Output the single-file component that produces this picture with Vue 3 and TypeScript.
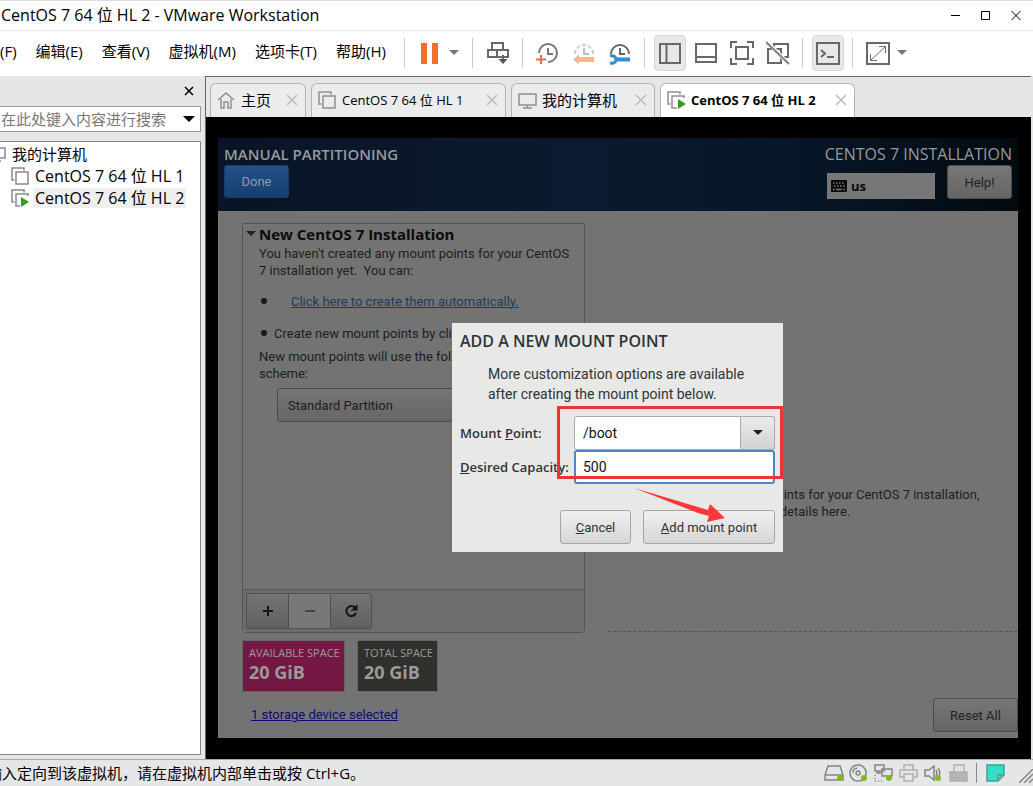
<script setup lang="ts">
import { ref } from 'vue'

interface VmTab {
  label: string
  icon: 'home' | 'vm' | 'computer' | 'running'
  size: 'short' | 'medium' | 'long'
  cjk: boolean
}

const menus: string[] = ['(F)', '编辑(E)', '查看(V)', '虚拟机(M)', '选项卡(T)', '帮助(H)']

const tabs: VmTab[] = [
  { label: '主页', icon: 'home', size: 'short', cjk: true },
  { label: 'CentOS 7 64 位 HL 1', icon: 'vm', size: 'long', cjk: false },
  { label: '我的计算机', icon: 'computer', size: 'medium', cjk: true },
  { label: 'CentOS 7 64 位 HL 2', icon: 'running', size: 'long', cjk: false },
]
const activeTab = ref(3)

const machines = [
  { name: 'CentOS 7 64 位 HL 1', running: false },
  { name: 'CentOS 7 64 位 HL 2', running: true },
]

const search = ref('')
const keyboard = ref('us')
const scheme = ref('Standard Partition')
const mountPoint = ref('/boot')
const capacity = ref('500')
</script>

<template>
  <div class="window">
    <header class="titlebar">
      <h1>CentOS 7 64 位 HL 2 - VMware Workstation</h1>
      <div class="window-buttons">
        <button type="button" aria-label="Minimize">
          <svg width="12" height="12" viewBox="0 0 12 12"><path d="M1 6.500h9" /></svg>
        </button>
        <button type="button" aria-label="Maximize">
          <svg width="12" height="12" viewBox="0 0 12 12"><path d="M1.500 2.500h8v8h-8z" /></svg>
        </button>
        <button type="button" aria-label="Close">
          <svg width="12" height="12" viewBox="0 0 12 12"><path d="M1.500 2l9 9M10.500 2l-9 9" /></svg>
        </button>
      </div>
    </header>

    <div class="toolbar">
      <nav class="menu">
        <button v-for="m in menus" :key="m" type="button">{{ m }}</button>
      </nav>
      <span class="sep"></span>
      <button class="tool" type="button" aria-label="Suspend">
        <svg width="24" height="24" viewBox="0 0 24 24"><path d="M3 2h6v21H3zM14 2h6v21h-6z" fill="#f26f2b" /></svg>
      </button>
      <button class="caret first-caret" type="button" aria-label="Power options">
        <svg width="10" height="6" viewBox="0 0 10 6"><path d="M0 0h10L5 5z" fill="#777" /></svg>
      </button>
      <span class="sep"></span>
      <button class="tool" type="button" aria-label="Send keys">
        <svg class="line" width="24" height="24" viewBox="0 0 24 24">
          <path d="M6 2h11v7H6zM2 9h9v7H2zM11 9h11v7H11zM17 14v7" /><path d="M12.500 18h9L17 23z" fill="#555" stroke="none" />
        </svg>
      </button>
      <span class="sep"></span>
      <button class="tool" type="button" aria-label="Take snapshot">
        <svg class="line" width="24" height="24" viewBox="0 0 24 24">
          <path d="M3 12A9 9 0 1 1 12 21M12 7v6h5" stroke="#777" /><path d="M5 14v9M0 18.500h10" stroke="#e8743a" />
        </svg>
      </button>
      <button class="tool" type="button" aria-label="Revert snapshot">
        <svg class="line" width="24" height="24" viewBox="0 0 24 24">
          <path d="M3 13a9 9 0 0 1 18 0" stroke="#ccc" stroke-dasharray="4 2" /><path d="M12 7v6h5" stroke="#bbb" />
          <path d="M1 18.500l6-5V16h15v5H7v2.500z" fill="#f8b692" stroke="none" />
        </svg>
      </button>
      <button class="tool" type="button" aria-label="Manage snapshots">
        <svg class="line" width="24" height="24" viewBox="0 0 24 24">
          <path d="M3 13a9 9 0 1 1 18 0M12 7v6h5" stroke="#666" />
          <path d="M2 15c4-1 6 1 6 3.500S6 23 2 22" stroke="#2f8fd0" stroke-width="3" /><path d="M8 18.500h14" stroke="#2f8fd0" stroke-width="4" />
        </svg>
      </button>
      <span class="sep"></span>
      <button class="tool pressed" type="button" aria-label="Show library">
        <svg class="line" width="24" height="24" viewBox="0 0 24 24"><path d="M2 3h20v19H2zM8.500 3v19" /></svg>
      </button>
      <button class="tool" type="button" aria-label="Show thumbnails">
        <svg class="line" width="24" height="24" viewBox="0 0 24 24"><path d="M2 3h20v18H2zM2 16h20" /></svg>
      </button>
      <button class="tool" type="button" aria-label="Full screen">
        <svg class="line" width="24" height="24" viewBox="0 0 24 24">
          <path d="M1 7V1h6M17 1h6v6M23 17v6h-6M7 23H1v-6M6 6h12v12H6z" />
        </svg>
      </button>
      <button class="tool" type="button" aria-label="Unity">
        <svg class="line" width="24" height="24" viewBox="0 0 24 24">
          <path d="M8 8V3h14v13h-5M2 8h13v14H2z" /><path d="M1 1l22 22" stroke="#fff" stroke-width="4" /><path d="M0 1l23 22" stroke="#7d8389" />
        </svg>
      </button>
      <span class="sep"></span>
      <button class="tool pressed" type="button" aria-label="Console view">
        <svg class="line" width="24" height="24" viewBox="0 0 24 24"><path d="M1 2h22v21H1zM5 9l4 3.500L5 16M11 16h7" /></svg>
      </button>
      <span class="sep"></span>
      <button class="tool" type="button" aria-label="Stretch guest">
        <svg class="line thin" width="24" height="24" viewBox="0 0 24 24">
          <path d="M1 2h22v21H1z" stroke-width="2" /><path d="M5 19L19 6M13 5.500h6.500V12M4.500 13v6.500H11" />
        </svg>
      </button>
      <button class="caret" type="button" aria-label="Stretch options">
        <svg width="10" height="6" viewBox="0 0 10 6"><path d="M0 0h10L5 5z" fill="#777" /></svg>
      </button>
    </div>

    <div class="body">
      <aside class="sidebar">
        <div class="side-head">
          <button type="button" aria-label="Close library">
            <svg width="10" height="10" viewBox="0 0 10 10"><path d="M1 1l8 8M9 1L1 9" stroke="#000" stroke-width="1.500" /></svg>
          </button>
        </div>
        <div class="search">
          <input v-model="search" type="text" aria-label="Search" placeholder="在此处键入内容进行搜索" />
          <button type="button" aria-label="Search options">
            <svg width="12" height="6" viewBox="0 0 12 6"><path d="M0 0h12L6 6z" /></svg>
          </button>
        </div>
        <div class="tree">
          <div class="tree-root">
            <svg width="18" height="16" viewBox="0 0 18 16"><path d="M1 2h16v10H1zM6 15h7" fill="none" stroke="#888" stroke-width="1.500" /></svg>
            <span>我的计算机</span>
          </div>
          <ul>
            <li v-for="m in machines" :key="m.name">
              <svg width="18" height="18" viewBox="0 0 18 18">
                <path d="M3.500 13H1V1h12v2.500M5 5h12v12H5z" fill="none" stroke="#888" stroke-width="1.500" />
                <path v-if="m.running" d="M9 7h9v11H9z" fill="#fff" /><path v-if="m.running" d="M10 8l8 5-8 5z" fill="#3c9b1c" />
              </svg>
              <span :class="{ selected: m.running }">{{ m.name }}</span>
            </li>
          </ul>
        </div>
      </aside>

      <main class="workspace">
        <div class="tabs">
          <div v-for="(t, i) in tabs" :key="t.label" class="tab" :class="[t.size, { active: i === activeTab }]">
            <button class="tab-main" :class="{ cjk: t.cjk }" type="button" @click="activeTab = i">
              <svg width="20" height="20" viewBox="0 0 20 20" fill="none" stroke="#909090" stroke-width="1.500">
                <path v-if="t.icon === 'home'" d="M1 10l8-7 8 7M4 9v9h3v-6h4v6h3V9" />
                <path v-else-if="t.icon === 'computer'" d="M1 4h17v11H1zM5 18h9M9.500 15v3" />
                <template v-else>
                  <path d="M3.500 14H1V2h12v2.500M5 6h12v12H5z" />
                  <path v-if="t.icon === 'running'" d="M10 8h10v12H10z" fill="#fff" stroke="none" />
                  <path v-if="t.icon === 'running'" d="M11 9l8 5-8 5z" fill="#3c9b1c" stroke="none" />
                </template>
              </svg>
              <span>{{ t.label }}</span>
            </button>
            <button class="tab-close" type="button" aria-label="Close tab">
              <svg width="12" height="12" viewBox="0 0 12 12"><path d="M1 1l10 10M11 1L1 11" stroke="#bbb" stroke-width="1.500" /></svg>
            </button>
          </div>
        </div>

        <div class="screen">
          <div class="guest">
            <header class="guest-head">
              <div class="head-left">
                <h2>MANUAL PARTITIONING</h2>
                <button class="done" type="button">Done</button>
              </div>
              <div class="head-right">
                <p>CENTOS 7 INSTALLATION</p>
                <div class="head-controls">
                  <label class="keyboard">
                    <svg width="16" height="12" viewBox="0 0 16 12">
                      <rect width="16" height="12" rx="1" fill="#0a0a0a" />
                      <path d="M2 3h12M3 6h11" stroke="#777" stroke-width="1.500" stroke-dasharray="1.500 1.500" /><path d="M2 9.500h1.500M5 9.500h6M12.500 9.500H14" stroke="#777" stroke-width="1.500" />
                    </svg>
                    <input v-model="keyboard" type="text" aria-label="Keyboard layout" readonly />
                  </label>
                  <button class="gray-btn help" type="button">Help!</button>
                </div>
              </div>
            </header>

            <div class="guest-body">
              <section class="left">
                <div class="panel">
                  <div class="panel-main">
                    <h3>
                      <svg width="10" height="6" viewBox="0 0 10 6"><path d="M0 0h10L5 5z" fill="#222" /></svg>
                      New CentOS 7 Installation
                    </h3>
                    <p>You haven't created any mount points for your CentOS<br />7 installation yet.&nbsp; You can:</p>
                    <ul>
                      <li class="auto"><a href="#auto">Click here to create them automatically.</a></li>
                      <li>Create new mount points by clicking the '+' button.</li>
                    </ul>
                    <p>New mount points will use the following partitioning<br />scheme:</p>
                    <select v-model="scheme" class="scheme" aria-label="Partitioning scheme">
                      <option>Standard Partition</option>
                      <option>LVM</option>
                    </select>
                  </div>
                  <div class="panel-tools">
                    <button type="button" aria-label="Add"><svg width="12" height="12" viewBox="0 0 12 12"><path d="M6 1v10M1 6h10" /></svg></button>
                    <button type="button" class="off" aria-label="Remove"><svg width="12" height="12" viewBox="0 0 12 12"><path d="M1 6h10" /></svg></button>
                    <button type="button" aria-label="Reload">
                      <svg width="14" height="14" viewBox="0 0 14 14"><path d="M11 3.500A5 5 0 1 0 12 9" /><path d="M13.500 0v6.500H7z" class="solid" /></svg>
                    </button>
                  </div>
                </div>
                <div class="spaces">
                  <div class="space available"><span>AVAILABLE SPACE</span><strong>20 GiB</strong></div>
                  <div class="space total"><span>TOTAL SPACE</span><strong>20 GiB</strong></div>
                </div>
                <a class="storage" href="#storage">1 storage device selected</a>
              </section>

              <section class="right">
                <div class="details">
                  <p>When you create mount points for your CentOS 7 installation,<br />you'll be able to view their details here.</p>
                </div>
                <button class="gray-btn reset" type="button">Reset All</button>
              </section>
            </div>

            <div class="overlay">
              <form class="dialog" @submit.prevent>
                <h2>ADD A NEW MOUNT POINT</h2>
                <p>More customization options are available<br />after creating the mount point below.</p>
                <div class="field">
                  <label for="mount-point">Mount <u>P</u>oint:</label>
                  <div class="combo">
                    <input id="mount-point" v-model="mountPoint" type="text" />
                    <button type="button" aria-label="Choose mount point">
                      <svg width="10" height="6" viewBox="0 0 10 6"><path d="M0 0h10L5 5z" fill="#222" /></svg>
                    </button>
                  </div>
                </div>
                <div class="field">
                  <label for="capacity"><u>D</u>esired Capacity:</label>
                  <input id="capacity" v-model="capacity" class="focused" type="text" />
                </div>
                <div class="actions">
                  <button type="button"><u>C</u>ancel</button>
                  <button type="submit" class="add"><u>A</u>dd mount point</button>
                </div>
                <span class="highlight"></span>
                <svg class="arrow" width="94" height="38" viewBox="0 0 94 38"><path d="M0 0L74 22l2-6 15 14-18 4 2-6-11-3z" fill="#fb3838" /></svg>
              </form>
            </div>
          </div>
        </div>
      </main>
    </div>

    <footer class="status">
      <p>输入定向到该虚拟机，请在虚拟机内部单击或按 Ctrl+G。</p>
      <div class="devices">
        <svg width="20" height="18" viewBox="0 0 20 18"><path d="M4 2h12l3 9v5H1v-5zM1 11h18" /><circle cx="16" cy="14" r="3" /></svg>
        <svg width="20" height="18" viewBox="0 0 20 18"><path d="M9 1a8 8 0 1 0 .1 0zM9 7a2 2 0 1 0 .1 0zM4 9a5 5 0 0 1 4-5" /><circle cx="15" cy="14" r="3" /></svg>
        <svg width="20" height="18" viewBox="0 0 20 18"><path d="M1 1h9v6H1zM8 5h10v7H8zM5 7v2M2 9h5" /><path d="M1 11v6h9" stroke-dasharray="1 2" /><circle cx="15" cy="14" r="3" /></svg>
        <svg class="off" width="20" height="18" viewBox="0 0 20 18"><path d="M5 6V1h9v5M5 13H1V6h17v7h-4M5 10h9v7H5z" /></svg>
        <svg width="20" height="18" viewBox="0 0 20 18"><path d="M1 6h4l5-4v14l-5-4H1zM12 6q2 3 0 6M14 4q3 4 1 8" /><circle cx="14" cy="14" r="3" /></svg>
        <svg class="off" width="20" height="18" viewBox="0 0 20 18"><path d="M5 8V1h10v7M8 4h1M11 4h1" /><path d="M1 8h17v9H1z" class="stick" /></svg>
        <span class="status-sep"></span>
        <svg width="20" height="18" viewBox="0 0 20 18"><path d="M1 1h17v10l-6 6H1z" class="note" /><path d="M18 11h-6v6" /></svg>
        <svg class="grip" width="14" height="14" viewBox="0 0 14 14"><path d="M0 14L14 0M5 14l9-9M10 14l4-4" /></svg>
      </div>
    </footer>
  </div>
</template>

<style>
body {
  margin: 0;
}
</style>

<style scoped>
* {
  box-sizing: border-box;
}

.window {
  display: flex;
  flex-direction: column;
  min-height: 100vh;
  overflow: hidden;
  background: #e5e6e8;
  color: #000;
  font: 15px/20px "Open Sans", "Noto Sans CJK SC", sans-serif;
}

h1, h2, h3, p, ul {
  margin: 0;
  padding: 0;
}

ul {
  list-style: none;
}

button, input, select {
  margin: 0;
  padding: 0;
  border: 0;
  background: none;
  color: inherit;
  font: inherit;
  outline: none;
}

svg {
  display: block;
  flex: none;
}

.titlebar {
  display: flex;
  align-items: center;
  justify-content: space-between;
  height: 31px;
  padding: 0 11px 2px 1px;
  border-top: 1px solid #ddd;
  border-bottom: 1px solid #e4e4e4;
  background: #fff;
}

.titlebar h1 {
  font-size: 16px;
  font-weight: 400;
}

.window-buttons {
  display: flex;
  gap: 18px;
}

.window-buttons path {
  fill: none;
  stroke: #000;
}

.toolbar {
  display: flex;
  align-items: center;
  height: 45px;
  padding-bottom: 2px;
  background: #fff;
}

.menu {
  display: flex;
  flex: none;
  gap: 19px;
  width: 396px;
  padding-bottom: 3px;
  white-space: nowrap;
}

.sep {
  width: 1px;
  height: 30px;
  margin: 0 9px 0 8px;
  background: #c8c8c8;
}

.tool {
  display: grid;
  place-items: center;
  width: 32px;
  height: 36px;
}

.tool + .tool {
  margin-left: 4px;
}

.pressed {
  border: 1px solid #d6d6d8;
  border-radius: 4px;
  background: #e8e8ea;
}

.line {
  fill: none;
  stroke: #686868;
  stroke-width: 2;
}

.thin {
  stroke-width: 1;
}

.caret {
  margin-left: 3px;
}

.first-caret {
  margin-right: 5px;
}

.body {
  display: flex;
  flex: 1;
}

.sidebar {
  display: flex;
  flex: none;
  flex-direction: column;
  width: 201px;
  margin-right: 4px;
  padding-bottom: 4px;
}

.side-head {
  display: flex;
  align-items: center;
  justify-content: flex-end;
  height: 30px;
  padding-right: 7px;
}

.search {
  display: flex;
  align-items: center;
  height: 26px;
  padding-right: 5px;
  border: 1px solid #999;
  border-left: 0;
  background: #fff;
}

.search input {
  flex: 1;
  min-width: 0;
  padding-left: 1px;
}

.search input::placeholder {
  color: #777;
  opacity: 1;
}

.tree {
  flex: 1;
  margin-top: 9px;
  padding-top: 1px;
  border: 1px solid #888;
  border-left: 0;
  background: #fff;
}

.tree-root, .tree li {
  display: flex;
  align-items: center;
  height: 22px;
  white-space: nowrap;
}

.tree-root {
  gap: 6px;
  margin-left: -12px;
}

.tree li {
  gap: 4px;
  padding-left: 11px;
  font-size: 16px;
}

.tree li span {
  padding: 0 2px;
}

.tree .selected {
  background: #efefef;
}

.workspace {
  display: flex;
  flex: 1;
  flex-direction: column;
  min-width: 0;
  margin-right: 2px;
  border-top: 1px solid #666;
  border-left: 1px solid #666;
}

.tabs {
  display: flex;
  gap: 5px;
  height: 40px;
  padding: 6px 4px 0;
}

.tab {
  display: flex;
  align-items: center;
  justify-content: space-between;
  padding: 0 7px 2px 6px;
  border: 1px solid #b4b4b6;
  border-bottom: 0;
  border-radius: 6px 6px 0 0;
  background: #ebecee;
}

.short {
  width: 96px;
}

.medium {
  width: 144px;
}

.long {
  width: 195px;
}

.active {
  background: #fff;
  font-weight: 700;
}

.tab-main {
  display: flex;
  align-items: center;
  gap: 4px;
  font-size: 13px;
  white-space: nowrap;
}

.tab-main.cjk {
  font-size: 15px;
}

.screen {
  display: flex;
  flex: 1;
  padding: 21px 13px 21px 12px;
  background: #000;
}

.guest {
  position: relative;
  display: flex;
  flex: 1;
  flex-direction: column;
  min-width: 0;
  background: #737373;
  color: #1c1e1f;
  font-family: Roboto, sans-serif;
  font-size: 13px;
  line-height: 17px;
}

.guest h2, .guest h3, .guest strong, .guest label, .head-right p, .space {
  font-family: "Open Sans", sans-serif;
}

.guest-head {
  display: flex;
  justify-content: space-between;
  height: 73px;
  padding: 6px 6px 0;
  background: linear-gradient(90deg, #091426 0%, #0b1a30 45%, #07172a 70%, #030b10 100%);
  color: #969a9f;
}

.guest-head h2, .guest-head p {
  margin-bottom: 1px;
  font-size: 15px;
  font-weight: 600;
  line-height: 20px;
}

.guest-head p {
  font-size: 16px;
  font-weight: 400;
  text-align: right;
}

.done {
  width: 65px;
  height: 33px;
  border: 1px solid #173e6b;
  border-radius: 3px;
  background: linear-gradient(#235189, #173e6f);
  color: #8c9aaa;
}

.head-controls {
  display: flex;
  align-items: flex-start;
  justify-content: flex-end;
  gap: 12px;
}

.keyboard {
  display: flex;
  align-items: center;
  gap: 4px;
  width: 108px;
  height: 26px;
  margin-top: 8px;
  padding-left: 4px;
  background: #777;
  color: #0a0a0a;
}

.keyboard input {
  width: 70px;
  font-weight: 700;
}

.gray-btn {
  height: 34px;
  border: 1px solid #4a4a4a;
  border-radius: 3px;
  background: linear-gradient(#777, #656565);
  color: #222;
}

.help {
  width: 65px;
}

.guest-body {
  display: flex;
  flex: 1;
  gap: 23px;
  padding: 12px 0 6px 24px;
}

.left {
  display: flex;
  flex: none;
  flex-direction: column;
  width: 343px;
}

.panel {
  display: flex;
  flex: 1;
  flex-direction: column;
  border: 1px solid #555;
  border-radius: 0 0 4px 4px;
}

.panel-main {
  flex: 1;
  padding: 1px 0 0 16px;
  white-space: nowrap;
}

.panel h3 {
  display: flex;
  align-items: center;
  gap: 3px;
  margin: 0 0 2px -13px;
  color: #0b0b0b;
  font-size: 15px;
  line-height: 18px;
}

.panel li {
  display: flex;
  align-items: center;
  gap: 7px;
  height: 24px;
}

.panel li::before {
  width: 6px;
  height: 6px;
  margin-left: 2px;
  border-radius: 50%;
  background: #1a1a1a;
  content: "";
}

.panel ul {
  display: flex;
  flex-direction: column;
  gap: 8px;
  padding: 10px 0 3px;
}

.panel .auto {
  gap: 24px;
}

.auto a {
  color: #1b3b60;
}

.scheme {
  width: 290px;
  height: 34px;
  margin: 6px 0 0 18px;
  padding-left: 10px;
  appearance: none;
  border: 1px solid #4c4c4c;
  border-radius: 3px;
  background: linear-gradient(#757575, #666);
}

.panel-tools {
  display: flex;
  height: 43px;
  padding: 3px;
  border-top: 1px solid #555;
  background: #6d6d6d;
}

.panel-tools button {
  display: grid;
  place-items: center;
  width: 42px;
  height: 36px;
  border: 1px solid #505050;
  border-right: 0;
  background: linear-gradient(#737373, #626262);
}

.panel-tools button:first-child {
  border-radius: 3px 0 0 3px;
}

.panel-tools button:last-child {
  border-right: 1px solid #505050;
  border-radius: 0 3px 3px 0;
}

.panel-tools path {
  fill: none;
  stroke: #151515;
  stroke-width: 2;
}

.panel-tools .solid {
  fill: #151515;
  stroke: none;
}

.panel-tools .off {
  background: #787878;
}

.panel-tools .off path {
  stroke: #444;
}

.spaces {
  display: flex;
  gap: 12px;
  margin-top: 7px;
}

.space {
  display: flex;
  flex-direction: column;
  height: 52px;
  padding: 4px 6px;
  border: 1px solid #666;
  color: #9a9a9a;
  white-space: nowrap;
}

.space span {
  font-size: 11px;
  line-height: 16px;
}

.space strong {
  font-size: 18px;
  line-height: 22px;
}

.available {
  width: 103px;
  background: #741743;
}

.total {
  width: 81px;
  background: #30302d;
}

.storage {
  margin: 14px auto 9px 9px;
  color: #0a0a78;
}

.right {
  display: flex;
  flex: 1;
  flex-direction: column;
  min-width: 0;
}

.details {
  display: flex;
  flex: 1;
  align-items: flex-end;
  border-bottom: 1px dashed #555;
}

.details p {
  padding: 0 0 111px 21px;
  white-space: nowrap;
}

.reset {
  width: 85px;
  margin: 66px 0 0 auto;
}

.overlay {
  position: absolute;
  inset: 0 1px 1px 0;
  display: grid;
  place-items: center;
}

.dialog {
  position: relative;
  width: 331px;
  padding: 8px;
  background: #e8e8e7;
  color: #2e3436;
}

.dialog h2 {
  font-size: 16px;
  font-weight: 600;
  line-height: 20px;
}

.dialog p {
  margin: 13px 0 12px 28px;
  font-size: 14px;
  line-height: 20px;
}

.field {
  display: grid;
  grid-template-columns: 114px 1fr;
  align-items: center;
  white-space: nowrap;
}

.field label {
  font-weight: 600;
}

.field input {
  min-width: 0;
  width: 100%;
  height: 34px;
  padding-left: 8px;
  border: 1px solid #aaa;
  background: #fff;
  color: #111;
  font-size: 14px;
}

.field .focused {
  border: 2px solid #4a87c3;
  border-radius: 3px;
  padding-left: 7px;
}

.combo {
  display: flex;
}

.combo input {
  flex: 1;
  border-radius: 3px 0 0 3px;
}

.combo button {
  display: grid;
  place-items: center;
  width: 34px;
  border: 1px solid #aaa;
  border-left: 0;
  border-radius: 0 3px 3px 0;
  background: linear-gradient(#ececec, #d2d2d2);
}

.actions {
  display: flex;
  justify-content: flex-end;
  gap: 12px;
  margin-top: 26px;
}

.actions button {
  width: 71px;
  height: 34px;
  border: 1px solid #a6a6a6;
  border-radius: 3px;
  background: linear-gradient(#f0f0f0, #d6d6d6);
}

.actions .add {
  width: 132px;
}

.highlight {
  position: absolute;
  top: 83px;
  right: 0;
  width: 226px;
  height: 73px;
  border: 3px solid #ec3438;
  pointer-events: none;
}

.arrow {
  position: absolute;
  top: 165px;
  left: 182px;
}

.status {
  display: flex;
  align-items: center;
  justify-content: space-between;
  height: 27px;
  overflow: hidden;
  border-top: 1px solid #aaa;
  white-space: nowrap;
}

.status p {
  margin-left: -13px;
}

.devices {
  display: flex;
  align-items: center;
  gap: 5px;
}

.devices path {
  fill: none;
  stroke: #858585;
  stroke-width: 1.5;
}

.devices .off path {
  stroke: #b0b0b0;
}

.devices .stick {
  fill: #b5b5b5;
}

.devices .note {
  fill: #33dfc9;
  stroke: #37a69b;
}

.devices circle {
  fill: #7fbc1f;
}

.status-sep {
  width: 1px;
  height: 20px;
  margin: 0 4px 0 2px;
  background: #888;
}

.grip {
  align-self: flex-end;
  margin-left: 8px;
}
</style>
